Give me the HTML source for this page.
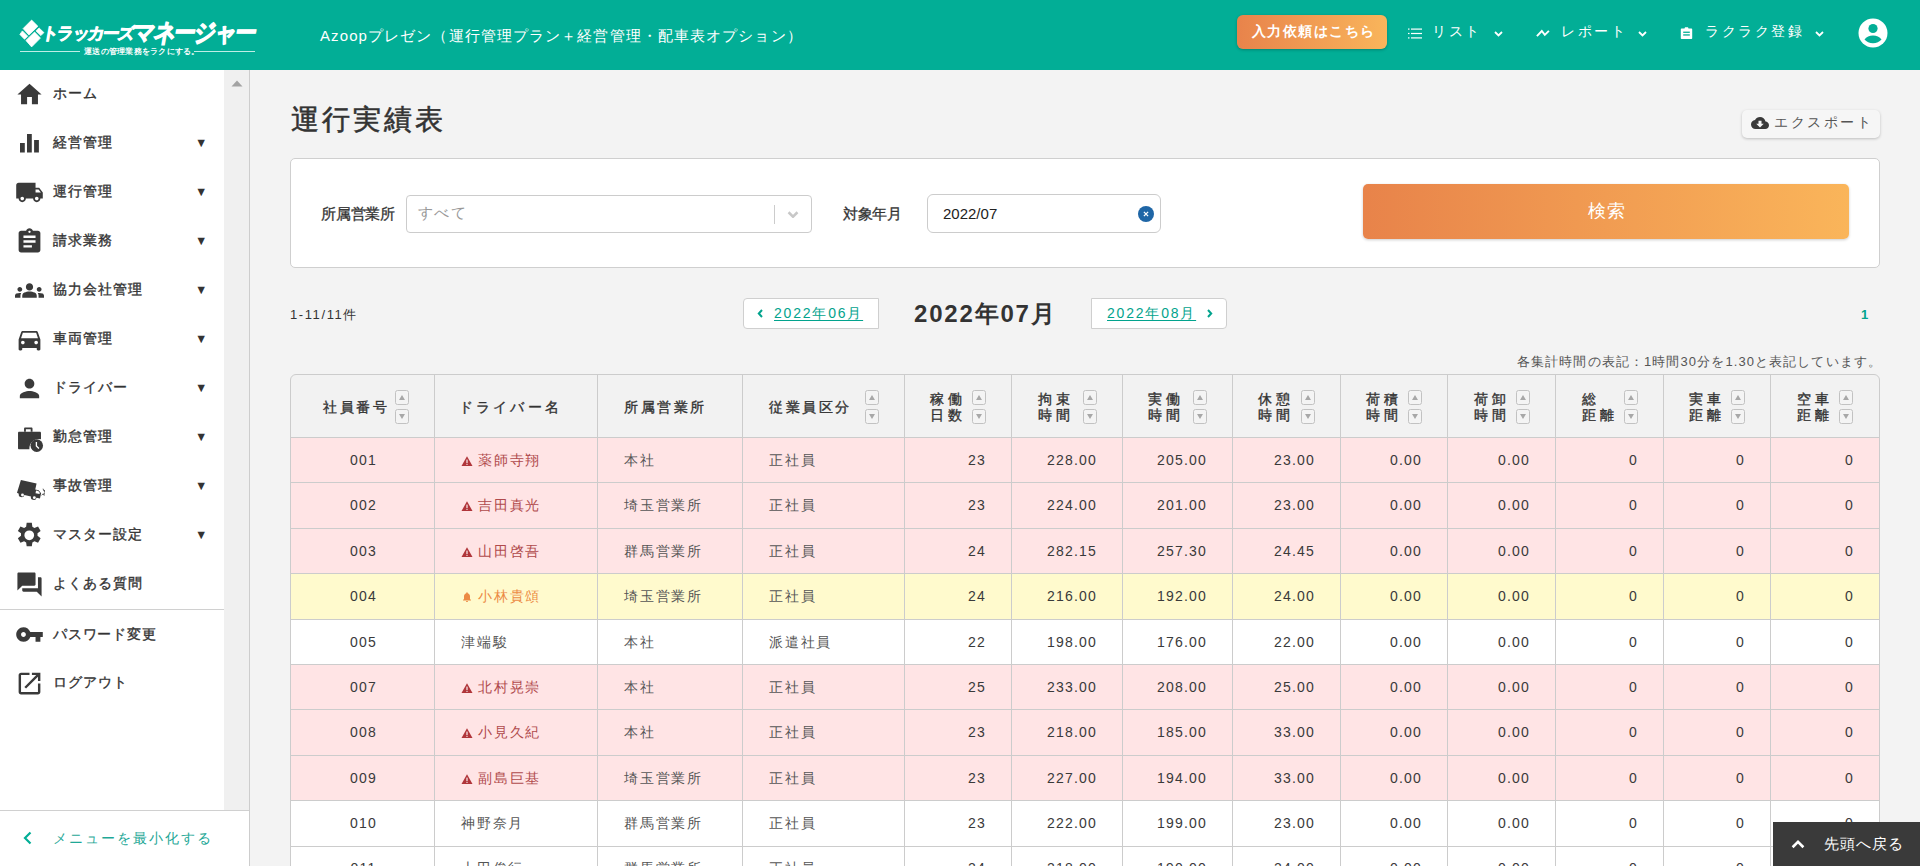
<!DOCTYPE html>
<html><head><meta charset="utf-8">
<style>
*{box-sizing:border-box;margin:0;padding:0}
html,body{width:1920px;height:866px;overflow:hidden}
body{font-family:"Liberation Sans",sans-serif;background:#f3f3f3;color:#333;position:relative}
.abs{position:absolute;white-space:nowrap}
.mt{font-size:14px;letter-spacing:1px;color:#333;-webkit-text-stroke:0.35px #333}
.hl{font-size:14px;color:#fff;letter-spacing:2.6px}
.th{font-size:14px;color:#333;letter-spacing:2.5px;-webkit-text-stroke:0.35px #333;line-height:17px}
.th2{font-size:14px;color:#333;letter-spacing:3.8px;-webkit-text-stroke:0.35px #333;line-height:17px}
.sb{position:absolute;width:14.2px;height:14.8px;border:1.3px solid #c2c2c2;border-radius:2.5px;background:#f4f4f4}
.sb i{position:absolute;left:3px;width:0;height:0;border-left:3.5px solid transparent;border-right:3.5px solid transparent}
.sb.u i{top:3.6px;border-bottom:5px solid #a8a8a8}
.sb.d i{top:4.2px;border-top:5px solid #a8a8a8}
.td{font-size:14px;letter-spacing:1.8px;color:#555;line-height:16px}
.num{font-size:14px;letter-spacing:1.2px;color:#3a3a3a;line-height:16px}
</style></head><body>

<div class="abs" style="left:0;top:0;width:1920px;height:70px;background:#02ae96"></div>
<svg class="abs" style="left:0;top:0;width:60px;height:60px" viewBox="0 0 60 60" fill="#fff">
<path d="M31.6 20.1L37.9 26.3 28.9 34.9 23.1 28.6Z" stroke="#fff" stroke-width="0.8" stroke-linejoin="round"/>
<path d="M39 27.9L43.9 32.6 40.9 35.6 36 30.9Z" stroke="#fff" stroke-width="0.8" stroke-linejoin="round"/>
<path d="M22.4 30.9L27.7 36.2 24.5 39.2 19.9 34.4Z" stroke="#fff" stroke-width="0.8" stroke-linejoin="round"/>
<path d="M34.6 32.1L40.4 38.1 31.6 46.9 25.9 40.4Z" stroke="#fff" stroke-width="0.8" stroke-linejoin="round"/></svg>
<div class="abs" style="left:44px;top:24px;font-size:17px;font-weight:700;color:#fff;transform-origin:0 0;transform:skewX(-10deg) scaleX(0.98);letter-spacing:-1.6px;-webkit-text-stroke:0.8px #fff;line-height:20px">トラッカーズ</div>
<div class="abs" style="left:136px;top:18px;font-size:25px;font-weight:700;color:#fff;transform-origin:0 0;transform:skewX(-10deg) scaleX(0.86);letter-spacing:-2px;-webkit-text-stroke:1.2px #fff;line-height:29px">マネージャー</div>
<div class="abs" style="left:20px;top:51px;width:60px;height:1px;background:#bfeee6"></div>
<div class="abs" style="left:194px;top:51px;width:61px;height:1px;background:#bfeee6"></div>
<div class="abs" style="left:84px;top:47px;font-size:7.5px;font-weight:700;color:#fff;letter-spacing:0.25px;line-height:9px">運送の管理業務をラクにする。</div>
<div class="abs" style="left:320px;top:27px;font-size:15px;color:#fff;letter-spacing:1.1px;line-height:18px">Azoopプレゼン（運行管理プラン＋経営管理・配車表オプション）</div>
<div class="abs" style="left:1237px;top:15px;width:150px;height:34px;border-radius:6px;background:linear-gradient(90deg,#e8834b,#f9b55b);box-shadow:0 1px 3px rgba(0,0,0,.25)"></div>
<div class="abs" style="left:1252px;top:23px;font-size:14px;font-weight:700;color:#fff;letter-spacing:1.45px;line-height:17px">入力依頼はこちら</div>
<svg class="abs" style="left:1408px;top:28px;width:14px;height:11px" viewBox="0 0 14 11" fill="#fff"><rect x="0" y="0.5" width="1.5" height="1.2"/><rect x="3" y="0.5" width="11" height="1.2"/><rect x="0" y="4.9" width="1.5" height="1.2"/><rect x="3" y="4.9" width="11" height="1.2"/><rect x="0" y="9.3" width="1.5" height="1.2"/><rect x="3" y="9.3" width="11" height="1.2"/></svg>
<div class="abs hl" style="left:1432px;top:23px;line-height:17px">リスト</div>
<svg class="abs" style="left:1494px;top:31px;width:9px;height:6px" viewBox="0 0 9 6" fill="none" stroke="#fff" stroke-width="1.8"><path d="M1 1l3.5 3.5L8 1"/></svg>
<svg class="abs" style="left:1535px;top:27px;width:16px;height:12px" viewBox="0 0 16 12" fill="none" stroke="#fff" stroke-width="1.9" stroke-linejoin="miter"><path d="M1.9 9.1L6.8 4 9.8 7.9 13.9 3.8"/></svg>
<div class="abs hl" style="left:1561px;top:23px;line-height:17px">レポート</div>
<svg class="abs" style="left:1638px;top:31px;width:9px;height:6px" viewBox="0 0 9 6" fill="none" stroke="#fff" stroke-width="1.8"><path d="M1 1l3.5 3.5L8 1"/></svg>
<svg class="abs" style="left:1680px;top:27px;width:13px;height:12px" viewBox="0 0 13 12" fill="#fff"><path d="M1.5 1.5h3l.5-1.2h3l.5 1.2h3c.4 0 .7.3.7.7v9.1c0 .4-.3.7-.7.7H1.5c-.4 0-.7-.3-.7-.7V2.2c0-.4.3-.7.7-.7z"/><rect x="3.2" y="4.6" width="6.6" height="1.3" fill="#02ae96"/><rect x="3.2" y="7.3" width="6.6" height="1.3" fill="#02ae96"/></svg>
<div class="abs hl" style="left:1705px;top:23px;line-height:17px">ラクラク登録</div>
<svg class="abs" style="left:1815px;top:31px;width:9px;height:6px" viewBox="0 0 9 6" fill="none" stroke="#fff" stroke-width="1.8"><path d="M1 1l3.5 3.5L8 1"/></svg>
<svg class="abs" style="left:1858px;top:18px;width:30px;height:30px" viewBox="0 0 30 30"><circle cx="15" cy="15" r="14.5" fill="#fff"/><circle cx="15" cy="10.5" r="4.6" fill="#02ae96"/><path d="M6.5 21.5c1.8-2.6 5-4 8.5-4s6.7 1.4 8.5 4c-2 2.4-5 3.8-8.5 3.8s-6.5-1.4-8.5-3.8z" fill="#02ae96"/></svg>
<div class="abs" style="left:0;top:70px;width:224px;height:796px;background:#fff"></div>
<div class="abs" style="left:224px;top:70px;width:25px;height:796px;background:#f0f0f0"></div>
<div class="abs" style="left:249px;top:70px;width:1px;height:796px;background:#cdcdcd"></div>
<svg class="abs" style="left:231px;top:80px;width:12px;height:7px" viewBox="0 0 12 7" fill="#a3a3a3"><path d="M6 0.5L11.5 6.5H0.5z"/></svg>
<svg class="abs" style="left:15px;top:80px;width:29px;height:29px" viewBox="0 0 24 24" fill="#3a3a3a"><path d="M10 20v-6h4v6h5v-8h3L12 3 2 12h3v8z"/></svg>
<div class="abs mt" style="left:53px;top:84px;line-height:18px">ホーム</div>
<svg class="abs" style="left:15px;top:129px;width:29px;height:29px" viewBox="0 0 24 24" fill="#3a3a3a"><path d="M4.14 11.66h3.97v7.78H4.14zM9.93 4.22h3.97v15.22H9.93zM15.8 9h3.97v10.44H15.8z"/></svg>
<div class="abs mt" style="left:53px;top:133px;line-height:18px">経営管理</div>
<div class="abs" style="left:195px;top:136px;font-size:12.5px;color:#333;line-height:15px">▼</div>
<svg class="abs" style="left:15px;top:178px;width:29px;height:29px" viewBox="0 0 24 24" fill="#3a3a3a"><path d="M20 8h-3V4H3c-1.1 0-2 .9-2 2v11h2c0 1.66 1.34 3 3 3s3-1.34 3-3h6c0 1.66 1.34 3 3 3s3-1.34 3-3h2v-5l-3-4zM6 18.5c-.83 0-1.5-.67-1.5-1.5s.67-1.5 1.5-1.5 1.5.67 1.5 1.5-.67 1.5-1.5 1.5zm13.5-9l1.96 2.5H17V9.5h2.5zm-1.5 9c-.83 0-1.5-.67-1.5-1.5s.67-1.5 1.5-1.5 1.5.67 1.5 1.5-.67 1.5-1.5 1.5z"/></svg>
<div class="abs mt" style="left:53px;top:182px;line-height:18px">運行管理</div>
<div class="abs" style="left:195px;top:185px;font-size:12.5px;color:#333;line-height:15px">▼</div>
<svg class="abs" style="left:15px;top:227px;width:29px;height:29px" viewBox="0 0 24 24" fill="#3a3a3a"><path d="M19 3h-4.18C14.4 1.84 13.3 1 12 1c-1.3 0-2.4.84-2.82 2H5c-1.1 0-2 .9-2 2v14c0 1.1.9 2 2 2h14c1.1 0 2-.9 2-2V5c0-1.1-.9-2-2-2zm-7 0c.55 0 1 .45 1 1s-.45 1-1 1-1-.45-1-1 .45-1 1-1zm2 14H7v-2h7v2zm3-4H7v-2h10v2zm0-4H7V7h10v2z"/></svg>
<div class="abs mt" style="left:53px;top:231px;line-height:18px">請求業務</div>
<div class="abs" style="left:195px;top:234px;font-size:12.5px;color:#333;line-height:15px">▼</div>
<svg class="abs" style="left:15px;top:276px;width:29px;height:29px" viewBox="0 0 24 24" fill="#3a3a3a"><path d="M12 12.75c1.63 0 3.07.39 4.24.9 1.08.48 1.76 1.56 1.76 2.73V18H6v-1.61c0-1.18.68-2.26 1.76-2.73 1.17-.52 2.61-.91 4.24-.91zM4 13c1.1 0 2-.9 2-2s-.9-2-2-2-2 .9-2 2 .9 2 2 2zm1.13 1.1c-.37-.06-.74-.1-1.13-.1-.99 0-1.930.21-2.78.58C.48 14.9 0 15.62 0 16.43V18h4.5v-1.61c0-.83.23-1.61.63-2.29zM20 13c1.1 0 2-.9 2-2s-.9-2-2-2-2 .9-2 2 .9 2 2 2zm4 3.43c0-.81-.48-1.53-1.22-1.850-.85-.37-1.79-.58-2.78-.58-.39 0-.76.04-1.13.1.4.68.63 1.46.63 2.29V18H24v-1.57zM12 6c1.66 0 3 1.34 3 3s-1.34 3-3 3-3-1.34-3-3 1.34-3 3-3z"/></svg>
<div class="abs mt" style="left:53px;top:280px;line-height:18px">協力会社管理</div>
<div class="abs" style="left:195px;top:283px;font-size:12.5px;color:#333;line-height:15px">▼</div>
<svg class="abs" style="left:15px;top:325px;width:29px;height:29px" viewBox="0 0 24 24" fill="#3a3a3a"><path d="M18.92 6.01C18.72 5.42 18.16 5 17.5 5h-11c-.66 0-1.21.42-1.42 1.01L3 12v8c0 .55.45 1 1 1h1c.55 0 1-.45 1-1v-1h12v1c0 .55.45 1 1 1h1c.55 0 1-.45 1-1v-8l-2.08-5.99zM6.5 16c-.83 0-1.5-.67-1.5-1.5S5.67 13 6.5 13s1.5.67 1.5 1.5S7.33 16 6.5 16zm11 0c-.83 0-1.5-.67-1.5-1.5s.67-1.5 1.5-1.5 1.5.67 1.5 1.5-.67 1.5-1.5 1.5zM5 11l1.5-4.5h11L19 11H5z"/></svg>
<div class="abs mt" style="left:53px;top:329px;line-height:18px">車両管理</div>
<div class="abs" style="left:195px;top:332px;font-size:12.5px;color:#333;line-height:15px">▼</div>
<svg class="abs" style="left:15px;top:374px;width:29px;height:29px" viewBox="0 0 24 24" fill="#3a3a3a"><path d="M12 12c2.21 0 4-1.79 4-4s-1.790-4-4-4-4 1.79-4 4 1.79 4 4 4zm0 2c-2.67 0-8 1.34-8 4v2h16v-2c0-2.66-5.330-4-8-4z"/></svg>
<div class="abs mt" style="left:53px;top:378px;line-height:18px">ドライバー</div>
<div class="abs" style="left:195px;top:381px;font-size:12.5px;color:#333;line-height:15px">▼</div>
<svg class="abs" style="left:15px;top:423px;width:29px;height:29px" viewBox="0 0 24 24" fill="#3a3a3a"><path d="M7.5 7.3V4.6c0-.5.4-.9.9-.9h5.2c.5 0 .9.4.9.9v2.7h-1.5V5.1H9v2.2z"/><path d="M3.5 7.2h17c.6 0 1 .4 1 1v5.2a7.8 7.8 0 0 0-9.6 8.4H3.5c-.6 0-1-.4-1-1V8.2c0-.6.4-1 1-1z"/><circle cx="18" cy="18.7" r="5.2"/><path d="M17.7 15.8v3.2l2.1 2.1" stroke="#fff" stroke-width="1.1" fill="none"/></svg>
<div class="abs mt" style="left:53px;top:427px;line-height:18px">勤怠管理</div>
<div class="abs" style="left:195px;top:430px;font-size:12.5px;color:#333;line-height:15px">▼</div>
<svg class="abs" style="left:14px;top:471.5px;width:31.3px;height:31.3px" viewBox="0 0 24 24" fill="#3a3a3a"><path d="M5.3 6.2l12 2.7-1 4.5 2.6.6 1.9 2.3-.9 4-2.6-.6a2.2 2.2 0 0 1-4.3-1l-5-1.1a2.2 2.2 0 0 1-4.3-1L2.3 16z"/><circle cx="6.5" cy="17.6" r="1.1" fill="#fff"/><circle cx="15.6" cy="19.7" r="1.1" fill="#fff"/><path d="M16.9 14.2l1.7.4 1.2 1.4-.2.9-3.1-.7z" fill="#fff"/><path d="M22.3 12.8l.5 1.6 1.2-.5-.7 1.3 1 .9-1.4.2.3 1.6-1.1-1-.9 1" stroke="#333" stroke-width="0.6" fill="none"/></svg>
<div class="abs mt" style="left:53px;top:476px;line-height:18px">事故管理</div>
<div class="abs" style="left:195px;top:479px;font-size:12.5px;color:#333;line-height:15px">▼</div>
<svg class="abs" style="left:13.2px;top:519px;width:32.5px;height:32.5px" viewBox="0 0 24 24" fill="#3a3a3a"><path d="M10.1 2.8h3.8l.4 2.9 1.5.9 2.7-1.1 1.9 3.3-2.3 1.8v1.8l2.3 1.8-1.9 3.3-2.7-1.1-1.5.9-.4 2.9h-3.8l-.4-2.9-1.5-.9-2.7 1.1-1.9-3.3 2.3-1.8v-1.8L3.6 8.8l1.9-3.3 2.7 1.1 1.5-.9zM12 8.4a3.6 3.6 0 1 0 0 7.2 3.6 3.6 0 1 0 0-7.2z" fill-rule="evenodd"/></svg>
<div class="abs mt" style="left:53px;top:525px;line-height:18px">マスター設定</div>
<div class="abs" style="left:195px;top:528px;font-size:12.5px;color:#333;line-height:15px">▼</div>
<svg class="abs" style="left:15px;top:570px;width:29px;height:29px" viewBox="0 0 24 24" fill="#3a3a3a"><path d="M21 6h-2v9H6v2c0 .55.45 1 1 1h11l4 4V7c0-.55-.45-1-1-1zm-4 6V3c0-.55-.45-1-1-1H3c-.55 0-1 .45-1 1v14l4-4h10c.55 0 1-.45 1-1z"/></svg>
<div class="abs mt" style="left:53px;top:574px;line-height:18px">よくある質問</div>
<div class="abs" style="left:0;top:609px;width:224px;height:1px;background:#d0d0d0"></div>
<svg class="abs" style="left:15px;top:620px;width:29px;height:29px" viewBox="0 0 24 24" fill="#3a3a3a"><path d="M12.65 10C11.830 7.67 9.61 6 7 6c-3.31 0-6 2.69-6 6s2.69 6 6 6c2.61 0 4.83-1.67 5.65-4H17v4h4v-4h2v-4H12.65zM7 14c-1.1 0-2-.9-2-2s.9-2 2-2 2 .9 2 2-.9 2-2 2z"/></svg>
<div class="abs mt" style="left:53px;top:625px;line-height:18px;letter-spacing:0.8px">パスワード変更</div>
<svg class="abs" style="left:15px;top:669px;width:29px;height:29px" viewBox="0 0 24 24" fill="#3a3a3a"><path d="M19 19H5V5h7V3H5c-1.11 0-2 .9-2 2v14c0 1.1.89 2 2 2h14c1.1 0 2-.9 2-2v-7h-2v7zM14 3v2h3.59l-9.83 9.83 1.41 1.41L19 6.41V10h2V3h-7z"/></svg>
<div class="abs mt" style="left:53px;top:673px;line-height:18px">ログアウト</div>
<div class="abs" style="left:0;top:810px;width:249px;height:1px;background:#d0d0d0"></div>
<div class="abs" style="left:0;top:811px;width:249px;height:55px;background:#fff"></div>
<svg class="abs" style="left:23px;top:831px;width:9px;height:14px" viewBox="0 0 9 14" fill="none" stroke="#02ae96" stroke-width="2.2"><path d="M7.5 1.5L2 7l5.5 5.5"/></svg>
<div class="abs" style="left:53px;top:829px;font-size:14px;letter-spacing:2px;color:#1fa897;line-height:18px">メニューを最小化する</div>
<div class="abs" style="left:291px;top:103px;font-size:28px;letter-spacing:3px;color:#333;line-height:34px;-webkit-text-stroke:0.55px #333">運行実績表</div>
<div class="abs" style="left:1742px;top:110px;width:138px;height:28px;border-radius:5px;background:#f6f6f6;box-shadow:0 1px 3px rgba(0,0,0,.22)"></div>
<svg class="abs" style="left:1751px;top:114px;width:18px;height:18px" viewBox="0 0 24 24" fill="#3a3a3a"><path d="M19.35 10.04C18.67 6.59 15.64 4 12 4 9.11 4 6.64 5.640 5.35 8.04 2.34 8.36 0 10.91 0 14c0 3.31 2.69 6 6 6h13c2.76 0 5-2.24 5-5 0-2.64-2.05-4.78-4.65-4.96zM17 13l-5 5-5-5h3V9h4v4h3z"/></svg>
<div class="abs" style="left:1774px;top:113px;font-size:14px;letter-spacing:2.6px;color:#555;line-height:18px">エクスポート</div>
<div class="abs" style="left:290px;top:158px;width:1590px;height:110px;border:1px solid #cfcfcf;border-radius:5px;background:#fff"></div>
<div class="abs" style="left:321px;top:205px;font-size:15px;letter-spacing:-0.25px;color:#333;line-height:18px;-webkit-text-stroke:0.3px #333">所属営業所</div>
<div class="abs" style="left:406px;top:195px;width:406px;height:38px;border:1px solid #cccccc;border-radius:4px;background:#fff"></div>
<div class="abs" style="left:418px;top:204px;font-size:15px;letter-spacing:1.3px;color:#999;line-height:18px">すべて</div>
<div class="abs" style="left:774px;top:205px;width:1px;height:19px;background:#ccc"></div>
<svg class="abs" style="left:787px;top:211px;width:12px;height:7px" viewBox="0 0 9 5.5" fill="none" stroke="#c8c8c8" stroke-width="2"><path d="M1 1l3.5 3.5L8 1"/></svg>
<div class="abs" style="left:843px;top:205px;font-size:15px;letter-spacing:-0.5px;color:#333;line-height:18px;-webkit-text-stroke:0.3px #333">対象年月</div>
<div class="abs" style="left:927px;top:194px;width:234px;height:39px;border:1px solid #cccccc;border-radius:6px;background:#fff"></div>
<div class="abs" style="left:943px;top:205px;font-size:15px;color:#222;line-height:17px">2022/07</div>
<svg class="abs" style="left:1138px;top:206px;width:16px;height:16px" viewBox="0 0 16 16"><circle cx="8" cy="8" r="8" fill="#1f66a6"/><path d="M5.9 5.9l4.2 4.2M10.1 5.9l-4.2 4.2" stroke="#fff" stroke-width="1.3"/></svg>
<div class="abs" style="left:1363px;top:184px;width:486px;height:55px;border-radius:5px;background:linear-gradient(90deg,#e8834a,#fab55a);box-shadow:0 1px 3px rgba(0,0,0,.2)"></div>
<div class="abs" style="left:1588px;top:200px;font-size:18px;color:#fff;line-height:22px;letter-spacing:0.5px">検索</div>
<div class="abs" style="left:290px;top:307px;font-size:13px;letter-spacing:1.6px;color:#333;line-height:16px">1-11/11件</div>
<div class="abs" style="left:743px;top:298px;width:136px;height:31px;border:1px solid #cfcfcf;border-radius:4px 0 0 4px;background:#fff"></div>
<svg class="abs" style="left:757px;top:309px;width:7px;height:9px" viewBox="0 0 7 9" fill="none" stroke="#02a38d" stroke-width="2"><path d="M5 1L1.8 4.5 5 8"/></svg>
<div class="abs" style="left:774px;top:305px;font-size:14px;letter-spacing:1.8px;color:#02a38d;line-height:17px;text-decoration:underline;text-underline-offset:2px">2022年06月</div>
<div class="abs" style="left:914px;top:300px;font-size:24px;font-weight:700;letter-spacing:1.8px;color:#333;line-height:28px">2022年07月</div>
<div class="abs" style="left:1091px;top:298px;width:136px;height:31px;border:1px solid #cfcfcf;border-radius:0 4px 4px 0;background:#fff"></div>
<div class="abs" style="left:1107px;top:305px;font-size:14px;letter-spacing:1.8px;color:#02a38d;line-height:17px;text-decoration:underline;text-underline-offset:2px">2022年08月</div>
<svg class="abs" style="left:1206px;top:309px;width:7px;height:9px" viewBox="0 0 7 9" fill="none" stroke="#02a38d" stroke-width="2"><path d="M2 1l3.2 3.5L2 8"/></svg>
<div class="abs" style="left:1861px;top:307px;font-size:13px;font-weight:700;color:#02a38d;line-height:16px">1</div>
<div class="abs" style="right:38px;top:354px;font-size:13px;letter-spacing:1.1px;color:#555;line-height:16px">各集計時間の表記：1時間30分を1.30と表記しています。</div>
<div class="abs" style="left:290px;top:374px;width:1590px;height:500px;border:1px solid #cccccc;border-radius:6px 6px 0 0;background:#f2f2f2;overflow:hidden">
<div class="abs" style="left:-1px;top:63px;width:1590px;height:44px;background:#ffe4e5"></div>
<div class="abs" style="left:-1px;top:108px;width:1590px;height:45px;background:#ffe4e5"></div>
<div class="abs" style="left:-1px;top:154px;width:1590px;height:44px;background:#ffe4e5"></div>
<div class="abs" style="left:-1px;top:199px;width:1590px;height:45px;background:#fffacd"></div>
<div class="abs" style="left:-1px;top:245px;width:1590px;height:44px;background:#ffffff"></div>
<div class="abs" style="left:-1px;top:290px;width:1590px;height:44px;background:#ffe4e5"></div>
<div class="abs" style="left:-1px;top:335px;width:1590px;height:45px;background:#ffe4e5"></div>
<div class="abs" style="left:-1px;top:381px;width:1590px;height:44px;background:#ffe4e5"></div>
<div class="abs" style="left:-1px;top:426px;width:1590px;height:45px;background:#ffffff"></div>
<div class="abs" style="left:-1px;top:472px;width:1590px;height:53px;background:#ffffff"></div>
<div class="abs" style="left:-1px;top:62px;width:1590px;height:1px;background:#cccccc"></div>
<div class="abs" style="left:-1px;top:107px;width:1590px;height:1px;background:#cccccc"></div>
<div class="abs" style="left:-1px;top:153px;width:1590px;height:1px;background:#cccccc"></div>
<div class="abs" style="left:-1px;top:198px;width:1590px;height:1px;background:#cccccc"></div>
<div class="abs" style="left:-1px;top:244px;width:1590px;height:1px;background:#cccccc"></div>
<div class="abs" style="left:-1px;top:289px;width:1590px;height:1px;background:#cccccc"></div>
<div class="abs" style="left:-1px;top:334px;width:1590px;height:1px;background:#cccccc"></div>
<div class="abs" style="left:-1px;top:380px;width:1590px;height:1px;background:#cccccc"></div>
<div class="abs" style="left:-1px;top:425px;width:1590px;height:1px;background:#cccccc"></div>
<div class="abs" style="left:-1px;top:471px;width:1590px;height:1px;background:#cccccc"></div>
<div class="abs" style="left:143px;top:-1px;width:1px;height:520px;background:#cccccc"></div>
<div class="abs" style="left:306px;top:-1px;width:1px;height:520px;background:#cccccc"></div>
<div class="abs" style="left:451px;top:-1px;width:1px;height:520px;background:#cccccc"></div>
<div class="abs" style="left:613px;top:-1px;width:1px;height:520px;background:#cccccc"></div>
<div class="abs" style="left:720px;top:-1px;width:1px;height:520px;background:#cccccc"></div>
<div class="abs" style="left:831px;top:-1px;width:1px;height:520px;background:#cccccc"></div>
<div class="abs" style="left:941px;top:-1px;width:1px;height:520px;background:#cccccc"></div>
<div class="abs" style="left:1049px;top:-1px;width:1px;height:520px;background:#cccccc"></div>
<div class="abs" style="left:1156px;top:-1px;width:1px;height:520px;background:#cccccc"></div>
<div class="abs" style="left:1264px;top:-1px;width:1px;height:520px;background:#cccccc"></div>
<div class="abs" style="left:1372px;top:-1px;width:1px;height:520px;background:#cccccc"></div>
<div class="abs" style="left:1479px;top:-1px;width:1px;height:520px;background:#cccccc"></div>
</div>
<div class="abs th" style="left:323px;top:399px">社員番号</div>
<div class="sb u" style="left:394.8px;top:390px"><i></i></div><div class="sb d" style="left:394.8px;top:409px"><i></i></div>
<div class="abs th" style="left:458.5px;top:399px;letter-spacing:3.3px">ドライバー名</div>
<div class="abs th" style="left:624px;top:399px">所属営業所</div>
<div class="abs th" style="left:769px;top:399px">従業員区分</div>
<div class="sb u" style="left:864.8px;top:390px"><i></i></div><div class="sb d" style="left:864.8px;top:409px"><i></i></div>
<div class="abs th2" style="left:930px;top:390.5px;line-height:16.6px">稼働<br>日数</div>
<div class="sb u" style="left:971.8px;top:390px"><i></i></div><div class="sb d" style="left:971.8px;top:409px"><i></i></div>
<div class="abs th2" style="left:1038px;top:390.5px;line-height:16.6px">拘束<br>時間</div>
<div class="sb u" style="left:1082.8px;top:390px"><i></i></div><div class="sb d" style="left:1082.8px;top:409px"><i></i></div>
<div class="abs th2" style="left:1148px;top:390.5px;line-height:16.6px">実働<br>時間</div>
<div class="sb u" style="left:1192.8px;top:390px"><i></i></div><div class="sb d" style="left:1192.8px;top:409px"><i></i></div>
<div class="abs th2" style="left:1258px;top:390.5px;line-height:16.6px">休憩<br>時間</div>
<div class="sb u" style="left:1300.8px;top:390px"><i></i></div><div class="sb d" style="left:1300.8px;top:409px"><i></i></div>
<div class="abs th2" style="left:1366px;top:390.5px;line-height:16.6px">荷積<br>時間</div>
<div class="sb u" style="left:1407.8px;top:390px"><i></i></div><div class="sb d" style="left:1407.8px;top:409px"><i></i></div>
<div class="abs th2" style="left:1474px;top:390.5px;line-height:16.6px">荷卸<br>時間</div>
<div class="sb u" style="left:1515.8px;top:390px"><i></i></div><div class="sb d" style="left:1515.8px;top:409px"><i></i></div>
<div class="abs th2" style="left:1582px;top:390.5px;line-height:16.6px">総<br>距離</div>
<div class="sb u" style="left:1623.8px;top:390px"><i></i></div><div class="sb d" style="left:1623.8px;top:409px"><i></i></div>
<div class="abs th2" style="left:1689px;top:390.5px;line-height:16.6px">実車<br>距離</div>
<div class="sb u" style="left:1730.8px;top:390px"><i></i></div><div class="sb d" style="left:1730.8px;top:409px"><i></i></div>
<div class="abs th2" style="left:1797px;top:390.5px;line-height:16.6px">空車<br>距離</div>
<div class="sb u" style="left:1838.8px;top:390px"><i></i></div><div class="sb d" style="left:1838.8px;top:409px"><i></i></div>
<div class="abs num" style="left:291px;width:143px;text-align:center;top:452px;padding-left:2px">001</div>
<svg class="abs" style="left:460.5px;top:455.5px;width:12px;height:10.5px" viewBox="0 0 12 10.5"><path d="M6 0.3L11.6 10.2H0.4z" fill="#b0353a"/><rect x="5.45" y="3.6" width="1.1" height="3.4" fill="#fff"/><rect x="5.45" y="7.8" width="1.1" height="1.1" fill="#fff"/></svg>
<div class="abs td" style="left:478px;top:452px;color:#b04a4c">薬師寺翔</div>
<div class="abs td" style="left:624px;top:452px">本社</div>
<div class="abs td" style="left:769px;top:452px">正社員</div>
<div class="abs num" style="left:836px;width:150px;text-align:right;top:452px">23</div>
<div class="abs num" style="left:947px;width:150px;text-align:right;top:452px">228.00</div>
<div class="abs num" style="left:1057px;width:150px;text-align:right;top:452px">205.00</div>
<div class="abs num" style="left:1165px;width:150px;text-align:right;top:452px">23.00</div>
<div class="abs num" style="left:1272px;width:150px;text-align:right;top:452px">0.00</div>
<div class="abs num" style="left:1380px;width:150px;text-align:right;top:452px">0.00</div>
<div class="abs num" style="left:1488px;width:150px;text-align:right;top:452px">0</div>
<div class="abs num" style="left:1595px;width:150px;text-align:right;top:452px">0</div>
<div class="abs num" style="left:1704px;width:150px;text-align:right;top:452px">0</div>
<div class="abs num" style="left:291px;width:143px;text-align:center;top:497px;padding-left:2px">002</div>
<svg class="abs" style="left:460.5px;top:500.5px;width:12px;height:10.5px" viewBox="0 0 12 10.5"><path d="M6 0.3L11.6 10.2H0.4z" fill="#b0353a"/><rect x="5.45" y="3.6" width="1.1" height="3.4" fill="#fff"/><rect x="5.45" y="7.8" width="1.1" height="1.1" fill="#fff"/></svg>
<div class="abs td" style="left:478px;top:497px;color:#b04a4c">吉田真光</div>
<div class="abs td" style="left:624px;top:497px">埼玉営業所</div>
<div class="abs td" style="left:769px;top:497px">正社員</div>
<div class="abs num" style="left:836px;width:150px;text-align:right;top:497px">23</div>
<div class="abs num" style="left:947px;width:150px;text-align:right;top:497px">224.00</div>
<div class="abs num" style="left:1057px;width:150px;text-align:right;top:497px">201.00</div>
<div class="abs num" style="left:1165px;width:150px;text-align:right;top:497px">23.00</div>
<div class="abs num" style="left:1272px;width:150px;text-align:right;top:497px">0.00</div>
<div class="abs num" style="left:1380px;width:150px;text-align:right;top:497px">0.00</div>
<div class="abs num" style="left:1488px;width:150px;text-align:right;top:497px">0</div>
<div class="abs num" style="left:1595px;width:150px;text-align:right;top:497px">0</div>
<div class="abs num" style="left:1704px;width:150px;text-align:right;top:497px">0</div>
<div class="abs num" style="left:291px;width:143px;text-align:center;top:543px;padding-left:2px">003</div>
<svg class="abs" style="left:460.5px;top:546.5px;width:12px;height:10.5px" viewBox="0 0 12 10.5"><path d="M6 0.3L11.6 10.2H0.4z" fill="#b0353a"/><rect x="5.45" y="3.6" width="1.1" height="3.4" fill="#fff"/><rect x="5.45" y="7.8" width="1.1" height="1.1" fill="#fff"/></svg>
<div class="abs td" style="left:478px;top:543px;color:#b04a4c">山田啓吾</div>
<div class="abs td" style="left:624px;top:543px">群馬営業所</div>
<div class="abs td" style="left:769px;top:543px">正社員</div>
<div class="abs num" style="left:836px;width:150px;text-align:right;top:543px">24</div>
<div class="abs num" style="left:947px;width:150px;text-align:right;top:543px">282.15</div>
<div class="abs num" style="left:1057px;width:150px;text-align:right;top:543px">257.30</div>
<div class="abs num" style="left:1165px;width:150px;text-align:right;top:543px">24.45</div>
<div class="abs num" style="left:1272px;width:150px;text-align:right;top:543px">0.00</div>
<div class="abs num" style="left:1380px;width:150px;text-align:right;top:543px">0.00</div>
<div class="abs num" style="left:1488px;width:150px;text-align:right;top:543px">0</div>
<div class="abs num" style="left:1595px;width:150px;text-align:right;top:543px">0</div>
<div class="abs num" style="left:1704px;width:150px;text-align:right;top:543px">0</div>
<div class="abs num" style="left:291px;width:143px;text-align:center;top:588px;padding-left:2px">004</div>
<svg class="abs" style="left:461px;top:591px;width:12px;height:12px" viewBox="0 0 24 24" fill="#ec8a44"><path d="M12 22c1.1 0 2-.9 2-2h-4c0 1.1.89 2 2 2zm6-6v-5c0-3.07-1.64-5.64-4.5-6.32V4c0-.83-.67-1.5-1.5-1.5s-1.5.67-1.5 1.5v.68C7.63 5.36 6 7.92 6 11v5l-2 2v1h16v-1l-2-2z"/></svg>
<div class="abs td" style="left:478px;top:588px;color:#ec8a44">小林貴頌</div>
<div class="abs td" style="left:624px;top:588px">埼玉営業所</div>
<div class="abs td" style="left:769px;top:588px">正社員</div>
<div class="abs num" style="left:836px;width:150px;text-align:right;top:588px">24</div>
<div class="abs num" style="left:947px;width:150px;text-align:right;top:588px">216.00</div>
<div class="abs num" style="left:1057px;width:150px;text-align:right;top:588px">192.00</div>
<div class="abs num" style="left:1165px;width:150px;text-align:right;top:588px">24.00</div>
<div class="abs num" style="left:1272px;width:150px;text-align:right;top:588px">0.00</div>
<div class="abs num" style="left:1380px;width:150px;text-align:right;top:588px">0.00</div>
<div class="abs num" style="left:1488px;width:150px;text-align:right;top:588px">0</div>
<div class="abs num" style="left:1595px;width:150px;text-align:right;top:588px">0</div>
<div class="abs num" style="left:1704px;width:150px;text-align:right;top:588px">0</div>
<div class="abs num" style="left:291px;width:143px;text-align:center;top:634px;padding-left:2px">005</div>
<div class="abs td" style="left:461px;top:634px">津端駿</div>
<div class="abs td" style="left:624px;top:634px">本社</div>
<div class="abs td" style="left:769px;top:634px">派遣社員</div>
<div class="abs num" style="left:836px;width:150px;text-align:right;top:634px">22</div>
<div class="abs num" style="left:947px;width:150px;text-align:right;top:634px">198.00</div>
<div class="abs num" style="left:1057px;width:150px;text-align:right;top:634px">176.00</div>
<div class="abs num" style="left:1165px;width:150px;text-align:right;top:634px">22.00</div>
<div class="abs num" style="left:1272px;width:150px;text-align:right;top:634px">0.00</div>
<div class="abs num" style="left:1380px;width:150px;text-align:right;top:634px">0.00</div>
<div class="abs num" style="left:1488px;width:150px;text-align:right;top:634px">0</div>
<div class="abs num" style="left:1595px;width:150px;text-align:right;top:634px">0</div>
<div class="abs num" style="left:1704px;width:150px;text-align:right;top:634px">0</div>
<div class="abs num" style="left:291px;width:143px;text-align:center;top:679px;padding-left:2px">007</div>
<svg class="abs" style="left:460.5px;top:682.5px;width:12px;height:10.5px" viewBox="0 0 12 10.5"><path d="M6 0.3L11.6 10.2H0.4z" fill="#b0353a"/><rect x="5.45" y="3.6" width="1.1" height="3.4" fill="#fff"/><rect x="5.45" y="7.8" width="1.1" height="1.1" fill="#fff"/></svg>
<div class="abs td" style="left:478px;top:679px;color:#b04a4c">北村晃崇</div>
<div class="abs td" style="left:624px;top:679px">本社</div>
<div class="abs td" style="left:769px;top:679px">正社員</div>
<div class="abs num" style="left:836px;width:150px;text-align:right;top:679px">25</div>
<div class="abs num" style="left:947px;width:150px;text-align:right;top:679px">233.00</div>
<div class="abs num" style="left:1057px;width:150px;text-align:right;top:679px">208.00</div>
<div class="abs num" style="left:1165px;width:150px;text-align:right;top:679px">25.00</div>
<div class="abs num" style="left:1272px;width:150px;text-align:right;top:679px">0.00</div>
<div class="abs num" style="left:1380px;width:150px;text-align:right;top:679px">0.00</div>
<div class="abs num" style="left:1488px;width:150px;text-align:right;top:679px">0</div>
<div class="abs num" style="left:1595px;width:150px;text-align:right;top:679px">0</div>
<div class="abs num" style="left:1704px;width:150px;text-align:right;top:679px">0</div>
<div class="abs num" style="left:291px;width:143px;text-align:center;top:724px;padding-left:2px">008</div>
<svg class="abs" style="left:460.5px;top:727.5px;width:12px;height:10.5px" viewBox="0 0 12 10.5"><path d="M6 0.3L11.6 10.2H0.4z" fill="#b0353a"/><rect x="5.45" y="3.6" width="1.1" height="3.4" fill="#fff"/><rect x="5.45" y="7.8" width="1.1" height="1.1" fill="#fff"/></svg>
<div class="abs td" style="left:478px;top:724px;color:#b04a4c">小見久紀</div>
<div class="abs td" style="left:624px;top:724px">本社</div>
<div class="abs td" style="left:769px;top:724px">正社員</div>
<div class="abs num" style="left:836px;width:150px;text-align:right;top:724px">23</div>
<div class="abs num" style="left:947px;width:150px;text-align:right;top:724px">218.00</div>
<div class="abs num" style="left:1057px;width:150px;text-align:right;top:724px">185.00</div>
<div class="abs num" style="left:1165px;width:150px;text-align:right;top:724px">33.00</div>
<div class="abs num" style="left:1272px;width:150px;text-align:right;top:724px">0.00</div>
<div class="abs num" style="left:1380px;width:150px;text-align:right;top:724px">0.00</div>
<div class="abs num" style="left:1488px;width:150px;text-align:right;top:724px">0</div>
<div class="abs num" style="left:1595px;width:150px;text-align:right;top:724px">0</div>
<div class="abs num" style="left:1704px;width:150px;text-align:right;top:724px">0</div>
<div class="abs num" style="left:291px;width:143px;text-align:center;top:770px;padding-left:2px">009</div>
<svg class="abs" style="left:460.5px;top:773.5px;width:12px;height:10.5px" viewBox="0 0 12 10.5"><path d="M6 0.3L11.6 10.2H0.4z" fill="#b0353a"/><rect x="5.45" y="3.6" width="1.1" height="3.4" fill="#fff"/><rect x="5.45" y="7.8" width="1.1" height="1.1" fill="#fff"/></svg>
<div class="abs td" style="left:478px;top:770px;color:#b04a4c">副島巨基</div>
<div class="abs td" style="left:624px;top:770px">埼玉営業所</div>
<div class="abs td" style="left:769px;top:770px">正社員</div>
<div class="abs num" style="left:836px;width:150px;text-align:right;top:770px">23</div>
<div class="abs num" style="left:947px;width:150px;text-align:right;top:770px">227.00</div>
<div class="abs num" style="left:1057px;width:150px;text-align:right;top:770px">194.00</div>
<div class="abs num" style="left:1165px;width:150px;text-align:right;top:770px">33.00</div>
<div class="abs num" style="left:1272px;width:150px;text-align:right;top:770px">0.00</div>
<div class="abs num" style="left:1380px;width:150px;text-align:right;top:770px">0.00</div>
<div class="abs num" style="left:1488px;width:150px;text-align:right;top:770px">0</div>
<div class="abs num" style="left:1595px;width:150px;text-align:right;top:770px">0</div>
<div class="abs num" style="left:1704px;width:150px;text-align:right;top:770px">0</div>
<div class="abs num" style="left:291px;width:143px;text-align:center;top:815px;padding-left:2px">010</div>
<div class="abs td" style="left:461px;top:815px">神野奈月</div>
<div class="abs td" style="left:624px;top:815px">群馬営業所</div>
<div class="abs td" style="left:769px;top:815px">正社員</div>
<div class="abs num" style="left:836px;width:150px;text-align:right;top:815px">23</div>
<div class="abs num" style="left:947px;width:150px;text-align:right;top:815px">222.00</div>
<div class="abs num" style="left:1057px;width:150px;text-align:right;top:815px">199.00</div>
<div class="abs num" style="left:1165px;width:150px;text-align:right;top:815px">23.00</div>
<div class="abs num" style="left:1272px;width:150px;text-align:right;top:815px">0.00</div>
<div class="abs num" style="left:1380px;width:150px;text-align:right;top:815px">0.00</div>
<div class="abs num" style="left:1488px;width:150px;text-align:right;top:815px">0</div>
<div class="abs num" style="left:1595px;width:150px;text-align:right;top:815px">0</div>
<div class="abs num" style="left:1704px;width:150px;text-align:right;top:815px">0</div>
<div class="abs num" style="left:291px;width:143px;text-align:center;top:860px;padding-left:2px">011</div>
<div class="abs td" style="left:461px;top:860px">上田俊行</div>
<div class="abs td" style="left:624px;top:860px">群馬営業所</div>
<div class="abs td" style="left:769px;top:860px">正社員</div>
<div class="abs num" style="left:836px;width:150px;text-align:right;top:860px">24</div>
<div class="abs num" style="left:947px;width:150px;text-align:right;top:860px">218.00</div>
<div class="abs num" style="left:1057px;width:150px;text-align:right;top:860px">190.00</div>
<div class="abs num" style="left:1165px;width:150px;text-align:right;top:860px">24.00</div>
<div class="abs num" style="left:1272px;width:150px;text-align:right;top:860px">0.00</div>
<div class="abs num" style="left:1380px;width:150px;text-align:right;top:860px">0.00</div>
<div class="abs num" style="left:1488px;width:150px;text-align:right;top:860px">0</div>
<div class="abs num" style="left:1595px;width:150px;text-align:right;top:860px">0</div>
<div class="abs num" style="left:1704px;width:150px;text-align:right;top:860px">0</div>
<div class="abs" style="left:1773px;top:822px;width:147px;height:44px;background:#3a3a3a"></div>
<svg class="abs" style="left:1791px;top:839px;width:14px;height:10px" viewBox="0 0 13 9" fill="none" stroke="#fff" stroke-width="2.4"><path d="M1.5 7.5L6.5 2.5l5 5"/></svg>
<div class="abs" style="left:1824px;top:835px;font-size:15px;letter-spacing:1px;color:#fff;line-height:18px">先頭へ戻る</div>
</body></html>
